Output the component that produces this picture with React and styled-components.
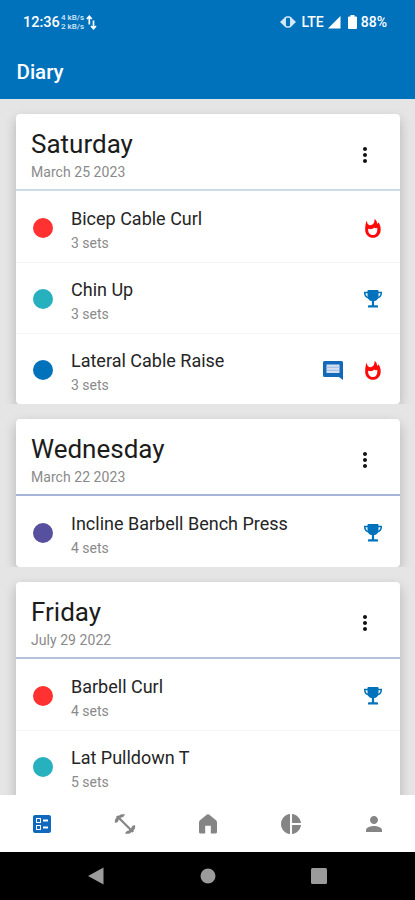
import React from "react";
import styled, { createGlobalStyle } from "styled-components";
import { MdBallot, MdMoreVert, MdPerson, MdPieChart } from "react-icons/md";

const BLUE = "#0072bc";

const days = [
  {
    name: "Saturday",
    date: "March 25 2023",
    line: "#ced9e9",
    exercises: [
      { name: "Bicep Cable Curl", sets: 3, color: "#ff3131", icons: ["fire"] },
      { name: "Chin Up", sets: 3, color: "#27b0bd", icons: ["trophy"] },
      {
        name: "Lateral Cable Raise",
        sets: 3,
        color: "#0072bc",
        icons: ["comment", "fire"],
      },
    ],
  },
  {
    name: "Wednesday",
    date: "March 22 2023",
    line: "#a5b3d9",
    exercises: [
      {
        name: "Incline Barbell Bench Press",
        sets: 4,
        color: "#57509f",
        icons: ["trophy"],
      },
    ],
  },
  {
    name: "Friday",
    date: "July 29 2022",
    line: "#b5c4dc",
    exercises: [
      { name: "Barbell Curl", sets: 4, color: "#ff3131", icons: ["trophy"] },
      { name: "Lat Pulldown T", sets: 5, color: "#27b0bd", icons: [] },
    ],
  },
];

function FireIcon() {
  return (
    <svg width="18" height="21" viewBox="0 0 18 21">
      <path
        d="M2.9 2.6C2.7 5 3.6 6.2 5.2 7c2.4 1 5.5-.8 5.4-5.9 2 1 2.4 3.3 2.7 5 .5-.3.8-1 .8-1.8 1.7 1.5 2.6 4.4 2.6 7.1 0 5-3.3 8.4-7.7 8.4S1.2 16.5 1.2 12c0-3.5.2-6.7 1.7-9.4z"
        fill="#ff0909"
      />
      <path
        d="M4.2 10.8c2.500.7 4.400.4 6.100-1.200.9 1 1.800.8 3 .1.4 4.800-1.500 7.400-4.400 7.400-3.200 0-5.100-2.500-4.700-6.300z"
        fill="#fff"
      />
    </svg>
  );
}

function TrophyIcon() {
  return (
    <svg width="20" height="20" viewBox="0 0 20 20" fill="none">
      <path
        d="M5.5 3.5H1.7c0 3.4 1.3 5 4.5 5.4M14.5 3.5h3.8c0 3.4-1.3 5-4.5 5.4"
        stroke={BLUE}
        strokeWidth="1.5"
      />
      <path
        d="M4.5 1.9q0-.9.9-.9h9.2q.9 0 .9.9v5c0 3-1.7 4.8-4.4 5.2v4.1h3q.9 0 .9.9v1.5H5v-1.5q0-.9.9-.9h3v-4.1c-2.7-.4-4.4-2.2-4.4-5.2z"
        fill={BLUE}
      />
    </svg>
  );
}

function CommentIcon() {
  return (
    <svg width="22" height="21" viewBox="0 0 22 21">
      <path
        d="M2.5 1h17q1.5 0 1.5 1.5V20l-4-3H2.5Q1 17 1 15.5v-13Q1 1 2.5 1z"
        fill="#1468b8"
      />
      <path d="M4.5 4.5h13V13h-13z" fill="#d3e0f2" />
      <path d="M4.5 7.300h13M4.500 10.300h13" stroke="#9dbbe0" />
    </svg>
  );
}

function DumbbellIcon() {
  return (
    <svg width="22" height="22" viewBox="0 0 22 22">
      <path d="M5.5 5.5l11 11" stroke="#858585" strokeWidth="2.2" />
      <path
        d="M.8 9.8C.7 7.2 1.3 5.6 2.5 4.8L2.2 3.5l1.3-.9.9.5C5.8 1.5 8 .9 11 1.4 9.700 4 8.500 4.200 7.200 4.500L4.600 7.100C4.300 8.700 3.400 10 .8 9.800z"
        fill="#858585"
      />
      <path
        d="M21.2 12.2c.1 2.6-.5 4.2-1.7 5l.3 1.3-1.3.9-.9-.5c-1.4 1.6-3.6 2.2-6.6 1.7 1.3-2.6 2.5-2.8 3.8-3.1l2.6-2.6c.3-1.6 1.2-2.9 3.800-2.700z"
        fill="#858585"
      />
    </svg>
  );
}

function HomeIcon() {
  return (
    <svg width="20" height="20" viewBox="0 0 20 20">
      <path
        d="M9 .5q1-.7 2 0l7 5.8q1 .8 1 2V18q0 1.5-1.5 1.5h-4.7v-7.7H7.2v7.7H2.5Q1 19.5 1 18V8.3q0-1.2 1-2z"
        fill="#858585"
      />
    </svg>
  );
}

const rowIcons = {
  fire: <FireIcon />,
  trophy: <TrophyIcon />,
  comment: <CommentIcon />,
};

function Day({ day }) {
  return (
    <Section>
      <Card>
        <CardHeader $line={day.line}>
          <div>
            <DayName>{day.name}</DayName>
            <DayDate>{day.date}</DayDate>
          </div>
          <MdMoreVert size={24} color="#111" />
        </CardHeader>
        {day.exercises.map((exercise) => (
          <Row key={exercise.name}>
            <Dot $color={exercise.color} />
            <Info>
              <ExerciseName>{exercise.name}</ExerciseName>
              <Sets>{exercise.sets} sets</Sets>
            </Info>
            <Icons>
              {exercise.icons.map((icon) => (
                <IconSlot key={icon}>{rowIcons[icon]}</IconSlot>
              ))}
            </Icons>
          </Row>
        ))}
      </Card>
    </Section>
  );
}

export default function App() {
  return (
    <Screen>
      <GlobalStyle />
      <Header>
        <StatusBar>
          <Time>12:36</Time>
          <Speed>
            <span>4 kB/s</span>
            <span>2 kB/s</span>
          </Speed>
          <svg width="11" height="15" viewBox="0 0 11 15" fill="none" stroke="#fff" strokeWidth="1.7">
            <path d="M3.3 9.5V1.5M.8 4l2.5-2.7L5.8 4M7.5 5.5v8M5 11l2.5 2.7L10 11" />
          </svg>
          <StatusRight>
            <svg width="16" height="12" viewBox="0 0 16 12">
              <path d="M5 1.2L0 6l5 4.8zM11 1.2L16 6l-5 4.8z" fill="#d5e8f8" />
              <rect x="5.2" y="1" width="5.6" height="10" rx="2" fill="none" stroke="#d5e8f8" strokeWidth="1.5" />
            </svg>
            <Network>LTE</Network>
            <svg width="13" height="13" viewBox="0 0 13 13">
              <path d="M12.5 0v12.5H0z" fill="#fff" />
            </svg>
            <Battery width="9" height="14" viewBox="0 0 9 14">
              <path d="M2.5 0h4v1.5H8q1 0 1 1V13q0 1-1 1H1q-1 0-1-1V2.5q0-1 1-1h1.5z" fill="#fff" />
            </Battery>
            <Percent>88%</Percent>
          </StatusRight>
        </StatusBar>
        <Title>Diary</Title>
      </Header>
      <Content>
        {days.map((day) => (
          <Day key={day.name} day={day} />
        ))}
      </Content>
      <Tabs>
        <MdBallot size={24} color="#1069bd" />
        <DumbbellIcon />
        <HomeIcon />
        <MdPieChart size={24} />
        <MdPerson size={24} />
      </Tabs>
      <SystemBar>
        <svg width="16" height="18" viewBox="0 0 16 18">
          <path d="M15.5.5v17L0 9z" fill="#9b9b9b" />
        </svg>
        <svg width="16" height="16" viewBox="0 0 16 16">
          <circle cx="8" cy="8" r="7.5" fill="#9b9b9b" />
        </svg>
        <svg width="16" height="16" viewBox="0 0 16 16">
          <rect width="16" height="16" rx="1.5" fill="#9b9b9b" />
        </svg>
      </SystemBar>
    </Screen>
  );
}

const GlobalStyle = createGlobalStyle`
  body {
    margin: 0;
    font-family: Roboto, "Liberation Sans", sans-serif;
  }
  * {
    box-sizing: border-box;
  }
  svg {
    display: block;
    flex-shrink: 0;
  }
`;

const Screen = styled.div`
  display: flex;
  flex-direction: column;
  width: 415px;
  height: 900px;
  overflow: hidden;
  background-color: #e5e5e5;
`;

const Header = styled.header`
  height: 98.5px;
  flex-shrink: 0;
  background-color: ${BLUE};
  color: white;
`;

const StatusBar = styled.div`
  display: flex;
  align-items: center;
  height: 44px;
  padding: 0 28px 0 23px;
`;

const Time = styled.span`
  width: 38px;
  font-size: 14.5px;
  font-weight: 500;
`;

const Speed = styled.div`
  display: flex;
  flex-direction: column;
  width: 25px;
  font-size: 8px;
  font-weight: 500;
  line-height: 9px;
  white-space: nowrap;
  color: #d5e8f8;
`;

const StatusRight = styled.div`
  display: flex;
  align-items: center;
  margin-left: auto;
`;

const Network = styled.span`
  margin: 0 4px 0 5px;
  font-size: 14px;
  font-weight: 500;
`;

const Battery = styled.svg`
  margin: 0 4px 0 7px;
`;

const Percent = styled.span`
  font-size: 14px;
  font-weight: 500;
`;

const Title = styled.h1`
  margin: 15px 0 0 16.5px;
  font-size: 20.5px;
  font-weight: 500;
  line-height: 26px;
`;

const Content = styled.main`
  flex: 1;
  min-height: 0;
  overflow: hidden;
`;

/* clips the card shadow, so the strip under each card stays plain */
const Section = styled.section`
  padding: 15.5px 15.5px 0;
  overflow: hidden;
`;

const Card = styled.div`
  border-radius: 4px;
  background-color: white;
  box-shadow: 0 5px 12px rgba(0, 0, 0, 0.22);
`;

const CardHeader = styled.div`
  display: flex;
  align-items: center;
  justify-content: space-between;
  height: 76.5px;
  padding: 7.5px 23px 0 15.5px;
  border-bottom: 2px solid ${(props) => props.$line};
`;

const DayName = styled.div`
  font-size: 26px;
  line-height: 30px;
  color: #1c1c1c;
`;

const DayDate = styled.div`
  margin-top: 3.5px;
  font-size: 14px;
  line-height: 18px;
  letter-spacing: 0.05px;
  color: #8a8a8a;
`;

const Row = styled.div`
  display: flex;
  align-items: center;
  height: 71px;
  padding: 4px 15px 0 17.5px;

  & + & {
    padding-top: 3px;
    border-top: 1px solid #f5f5f5;
  }
`;

const Dot = styled.span`
  width: 20px;
  height: 20px;
  border-radius: 50%;
  background-color: ${(props) => props.$color};
`;

const Info = styled.div`
  margin-left: 18px;
  padding-top: 4px;
`;

const ExerciseName = styled.div`
  font-size: 18px;
  line-height: 22px;
  color: #252525;
`;

const Sets = styled.div`
  margin-top: 4px;
  font-size: 14px;
  line-height: 18px;
  color: #8a8a8a;
`;

const Icons = styled.div`
  display: flex;
  gap: 16px;
  margin-left: auto;
`;

const IconSlot = styled.span`
  display: flex;
  align-items: center;
  justify-content: center;
  width: 24px;
  height: 24px;
`;

const Tabs = styled.nav`
  display: grid;
  grid-template-columns: repeat(5, 83px);
  place-items: center;
  height: 57px;
  flex-shrink: 0;
  background-color: white;
  color: #858585;
`;

const SystemBar = styled.footer`
  display: flex;
  align-items: center;
  justify-content: space-between;
  height: 48px;
  flex-shrink: 0;
  padding: 0 88px;
  background-color: black;
`;
